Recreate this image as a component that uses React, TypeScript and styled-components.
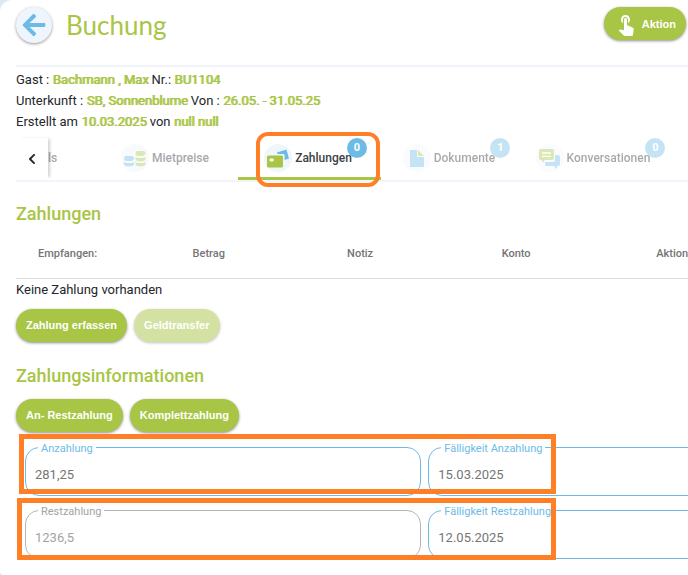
import React, { useState } from "react";
import styled, { createGlobalStyle } from "styled-components";
import { FaArrowLeft, FaChevronLeft } from "react-icons/fa";
import { MdTouchApp } from "react-icons/md";

const green = "#a8c545";
const blue = "#6cbbe7";
const mark = "#ff7f27";

const GlobalStyle = createGlobalStyle`
  * { box-sizing: border-box; }
  body {
    margin: 0;
    background: #dfe8f0;
    color: #24262b;
    font-family: Roboto, sans-serif;
    font-size: 13px;
  }
  button, input { font: inherit; }
`;

const Page = styled.main`
  min-height: 100vh;
  padding-left: 16px;
  overflow: hidden;
  background: #fff;
  border-radius: 12px 0 0 4px;
`;

const Header = styled.header`
  display: flex;
  align-items: flex-start;
  height: 67px;
  padding: 7px 2px 0 0;
  border-bottom: 2px solid #eff5fb;
`;

const BackButton = styled.button`
  display: flex;
  align-items: center;
  justify-content: center;
  width: 36px;
  height: 36px;
  padding: 0;
  border: 0;
  border-radius: 50%;
  background: #eff5fc;
  color: ${blue};
  box-shadow: 0 1px 3px rgba(0, 0, 0, 0.4);
`;

const Title = styled.h1`
  flex: 1;
  margin: 0 0 0 14px;
  color: ${green};
  font-family: Lato, sans-serif;
  font-size: 26px;
  font-weight: 400;
  line-height: 36px;
`;

const PillButton = styled.button`
  display: inline-flex;
  align-items: center;
  gap: 4px;
  height: 33px;
  padding: 0 10px;
  border: 0;
  border-radius: 17px;
  background: ${green};
  color: #fff;
  font-family: "Liberation Sans", sans-serif;
  font-size: 11px;
  font-weight: 700;
  white-space: nowrap;
  box-shadow: 0 1px 3px rgba(0, 0, 0, 0.45);

  &:disabled {
    background: #d3e2a2;
    box-shadow: 0 1px 3px rgba(0, 0, 0, 0.25);
  }
`;

const Facts = styled.div`
  padding-top: 2px;
  line-height: 21px;
`;

const Fact = styled.p`
  margin: 0;
  white-space: nowrap;

  strong {
    color: ${green};
    font-weight: 400;
    text-shadow: 1px 0 0 ${green};
  }
`;

const TabBar = styled.nav`
  display: flex;
  height: 50px;
  padding-top: 6px;
  border-bottom: 2px solid #eff5fb;
`;

const Scroller = styled.button`
  flex: none;
  width: 32px;
  padding: 0;
  border: 0;
  background: #fff;
  color: #24262b;
  font-size: 12px;
  line-height: 0;
  box-shadow: 4px -1px 3px -2px rgba(0, 0, 0, 0.18);
`;

const Tab = styled.button<{ $width: number; $active?: boolean }>`
  position: relative;
  flex: none;
  display: flex;
  align-items: center;
  justify-content: center;
  gap: 3px;
  width: ${(p) => p.$width}px;
  padding: 0 3px 3px 0;
  border: 0;
  background: none;
  color: ${(p) => (p.$active ? "#3d4045" : "#24262b")};
  font-weight: 500;
  font-size: 12px;
  opacity: ${(p) => (p.$active ? 1 : 0.4)};

  &::after {
    content: "";
    display: ${(p) => (p.$active ? "block" : "none")};
    position: absolute;
    left: 0;
    right: 0;
    bottom: 0;
    height: 3px;
    background: ${green};
  }
`;

const CutTab = styled(Tab)`
  justify-content: flex-start;
`;

const TabIcon = styled.span`
  display: flex;
  width: 28px;
  height: 28px;
  border-radius: 50%;
  background: #eff6fc;
`;

const TabLabel = styled.span`
  position: relative;
`;

const Badge = styled.span`
  position: absolute;
  left: 100%;
  top: -13px;
  width: 20px;
  height: 20px;
  margin-left: -5px;
  border-radius: 50%;
  background: ${blue};
  color: #fff;
  font-size: 11px;
  font-weight: 700;
  line-height: 20px;
  text-align: center;
`;

const TabMark = styled.span`
  position: absolute;
  z-index: 1;
  inset: -6px 1px -7px 18px;
  border: 4px solid ${mark};
  border-radius: 12px;
`;

const SectionTitle = styled.h2`
  margin: 0 0 3px;
  color: ${green};
  font-size: 18px;
  font-weight: 500;
  line-height: 24px;
`;

const Section = styled.section`
  padding: 20px 0 2px;
`;

const Table = styled.table`
  width: 115%;
  table-layout: fixed;
  border-collapse: collapse;
  border-bottom: 1px solid #dedede;

  th {
    height: 49px;
    padding: 0 0 0 22px;
    color: #757575;
    font-size: 11px;
    font-weight: 500;
    text-align: left;
  }
`;

const Empty = styled.p`
  margin: 0;
  line-height: 22px;
`;

const Buttons = styled.div`
  display: flex;
  gap: 7px;
  padding-top: 8px;
`;

const Fields = styled.form`
  display: grid;
  gap: 14px;
  padding: 15px 0 12px 9px;
`;

const FieldRow = styled.div`
  position: relative;
  display: grid;
  grid-template-columns: 1fr 1fr;
  gap: 7px;
  width: calc(120% + 4px);
`;

const RowMark = styled.span<{ $wide?: boolean }>`
  position: absolute;
  top: ${(p) => (p.$wide ? -12 : -13)}px;
  bottom: ${(p) => (p.$wide ? -1 : 2)}px;
  left: ${(p) => (p.$wide ? -8 : -6)}px;
  right: calc(33% + 5px);
  border: 5px solid ${mark};
  pointer-events: none;
`;

const Field = styled.div<{ $muted?: boolean }>`
  position: relative;
  color: ${(p) => (p.$muted ? "#a3a3a3" : blue)};

  label {
    position: absolute;
    top: -6px;
    left: 13px;
    padding: 0 3px;
    background: #fff;
    font-size: 11px;
    line-height: 15px;
  }

  input {
    display: block;
    width: 100%;
    height: 49px;
    padding: 6px 9px 0;
    border: 1px solid ${(p) => (p.$muted ? "#b5b5b5" : blue)};
    border-radius: 14px;
    outline: 0;
    background: #fff;
    color: ${(p) => (p.$muted ? "#a3a3a3" : "#757575")};
  }
`;

const Disc = ({ x, y, fill }: { x: number; y: number; fill: string }) => (
  <path fill={fill} d={`M${x} ${y}c0 2 10 2 10 0v3c0 2.4 -10 2.4 -10 0z`} />
);

const CoinsIcon = () => (
  <svg viewBox="0 0 28 28" width="28" height="28" aria-hidden="true">
    <rect x="3" y="12" width="10" height="5" rx="2.4" fill={blue} />
    <Disc x={3} y={17.4} fill={blue} />
    <rect x="14.5" y="7" width="10" height="5" rx="2.4" fill={green} />
    <Disc x={14.5} y={12.4} fill={green} />
    <Disc x={14.5} y={17.4} fill={green} />
  </svg>
);

const CardsIcon = () => (
  <svg viewBox="0 0 28 28" width="28" height="28" aria-hidden="true">
    <path fill={blue} d="M13 8.6 22.4 5.6 25 14.4 20.6 15.9V11.4Q20.6 10 19 10H13.5z" />
    <rect x="3" y="11.5" width="16" height="12" rx="1.6" fill={green} />
    <rect x="5.4" y="14.4" width="4.4" height="3" rx="1.4" fill="#fff" />
  </svg>
);

const DocumentIcon = () => (
  <svg viewBox="0 0 28 28" width="28" height="28" aria-hidden="true">
    <path fill={blue} d="M7 6h7v7h7v10H7z" />
    <path fill={green} d="M15 6l6 6h-6z" />
  </svg>
);

const ChatIcon = () => (
  <svg viewBox="0 0 28 28" width="28" height="28" aria-hidden="true">
    <path
      fill={blue}
      d="M19 11h3q2 0 2 2v7q0 2-2 2h-1v3l-3-3h-7q-2 0-2-2v-2h8q2 0 2-2z"
    />
    <path
      fill={green}
      d="M5 5h11q2 0 2 2v7q0 2-2 2H9l-3 3v-3H5q-2 0-2-2V7q0-2 2-2z"
    />
    <path stroke="#fff" strokeWidth="1.4" d="M6 9h9M6 12.4h9" />
  </svg>
);

const tabs = [
  { name: "Mietpreise", width: 143, icon: <CoinsIcon /> },
  { name: "Zahlungen", width: 143, icon: <CardsIcon />, count: 0, active: true },
  { name: "Dokumente", width: 139, icon: <DocumentIcon />, count: 1 },
  { name: "Konversationen", width: 149, icon: <ChatIcon />, count: 0 },
];

const columns = ["Empfangen:", "Betrag", "Notiz", "Konto", "Aktion"];

type TextFieldProps = { id: string; label: string; initial: string; muted?: boolean };

const TextField = ({ id, label, initial, muted }: TextFieldProps) => {
  const [value, setValue] = useState(initial);
  return (
    <Field $muted={muted}>
      <input
        id={id}
        value={value}
        disabled={muted}
        onChange={(e) => setValue(e.target.value)}
      />
      <label htmlFor={id}>{label}</label>
    </Field>
  );
};

export default function App() {
  return (
    <>
      <GlobalStyle />
      <Page>
        <Header>
          <BackButton aria-label="Zurück">
            <FaArrowLeft size={26} />
          </BackButton>
          <Title>Buchung</Title>
          <PillButton>
            <MdTouchApp size={24} />
            Aktion
          </PillButton>
        </Header>

        <Facts>
          <Fact>
            Gast : <strong>Bachmann , Max</strong> Nr.: <strong>BU1104</strong>
          </Fact>
          <Fact>
            Unterkunft : <strong>SB, Sonnenblume</strong> Von :{" "}
            <strong>26.05. - 31.05.25</strong>
          </Fact>
          <Fact>
            Erstellt am <strong>10.03.2025</strong> von <strong>null null</strong>
          </Fact>
        </Facts>

        <TabBar>
          <Scroller aria-label="Vorherige Tabs">
            <FaChevronLeft />
          </Scroller>
          <CutTab $width={47}>ls</CutTab>
          {tabs.map((tab) => (
            <Tab key={tab.name} $width={tab.width} $active={tab.active}>
              <TabIcon>{tab.icon}</TabIcon>
              <TabLabel>
                {tab.name}
                {tab.count !== undefined && <Badge>{tab.count}</Badge>}
              </TabLabel>
              {tab.active && <TabMark />}
            </Tab>
          ))}
        </TabBar>

        <Section>
          <SectionTitle>Zahlungen</SectionTitle>
          <Table>
            <thead>
              <tr>
                {columns.map((name) => (
                  <th key={name} scope="col">
                    {name}
                  </th>
                ))}
              </tr>
            </thead>
          </Table>
          <Empty>Keine Zahlung vorhanden</Empty>
          <Buttons>
            <PillButton>Zahlung erfassen</PillButton>
            <PillButton disabled>Geldtransfer</PillButton>
          </Buttons>
        </Section>

        <Section>
          <SectionTitle>Zahlungsinformationen</SectionTitle>
          <Buttons>
            <PillButton>An- Restzahlung</PillButton>
            <PillButton>Komplettzahlung</PillButton>
          </Buttons>
          <Fields>
            <FieldRow>
              <TextField id="deposit" label="Anzahlung" initial="281,25" />
              <TextField id="deposit-due" label="Fälligkeit Anzahlung" initial="15.03.2025" />
              <RowMark />
            </FieldRow>
            <FieldRow>
              <TextField id="rest" label="Restzahlung" initial="1236,5" muted />
              <TextField id="rest-due" label="Fälligkeit Restzahlung" initial="12.05.2025" />
              <RowMark $wide />
            </FieldRow>
          </Fields>
        </Section>
      </Page>
    </>
  );
}
